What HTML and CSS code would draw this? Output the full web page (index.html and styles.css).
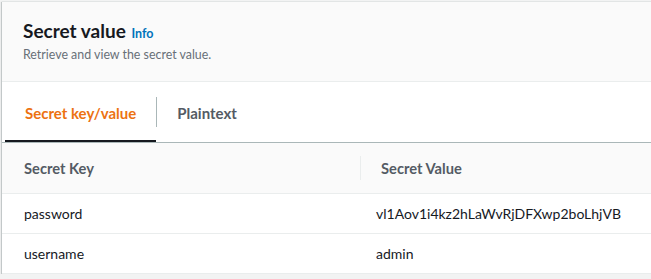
FILE: index.html
```html
<!DOCTYPE html>
<html lang="en">
<head>
  <meta charset="UTF-8">
  <title>Secret value</title>
  <link rel="stylesheet" href="styles.css">
</head>
<body>
  <div class="card">
    <div class="card-header">
      <h2>Secret value <a class="info" href="#">Info</a></h2>
      <p>Retrieve and view the secret value.</p>
    </div>

    <div class="tabs">
      <button class="tab active">Secret key/value</button>
      <span class="tab-sep"></span>
      <button class="tab">Plaintext</button>
    </div>

    <div class="kv-table">
      <div class="kv-row head">
        <div class="cell">Secret Key</div>
        <div class="cell sep">Secret Value</div>
      </div>
      <div class="kv-row">
        <div class="cell">password</div>
        <div class="cell value">vl1Aov1i4kz2hLaWvRjDFXwp2boLhjVB</div>
      </div>
      <div class="kv-row">
        <div class="cell">username</div>
        <div class="cell value">admin</div>
      </div>
    </div>
  </div>
</body>
</html>
```

FILE: styles.css
```css
:root {
  --page-bg: #f2f3f3;
  --header-bg: #fafafa;
  --border: #eaeded;
  --text: #16191f;
  --muted: #545b64;
  --sub: #687078;
  --orange: #ec7211;
  --link: #0073bb;
}

* {
  box-sizing: border-box;
}
body {
  margin: 0;
  background: var(--page-bg);
  font-family: Lato, "Open Sans", sans-serif;
  color: var(--text);
  overflow: hidden;
}
.card {
  margin: 1px 0 0 2px;
  width: 720px;
  background: white;
  box-shadow: 0 1px 1px 0 rgba(0,28,36,0.3), -1px 1px 1px 0 rgba(0,28,36,0.15);
  border-top: 1px solid #e2e5e5;
}
.card-header {
  background: var(--header-bg);
  padding: 18px 20px 18px 21px;
  border-bottom: 1px solid var(--border);
}
.card-header h2 {
  margin: 0;
  font-size: 19px;
  line-height: 22px;
  font-weight: 700;
}
.info {
  font-size: 12.5px;
  line-height: 1;
  color: var(--link);
  text-decoration: none;
  font-weight: 700;
  margin-left: 1px;
}
.card-header p {
  margin: 5px 0 0;
  font-size: 12.4px;
  line-height: 16px;
  color: var(--sub);
}
.tabs {
  display: flex;
  align-items: center;
  height: 61px;
  padding-left: 3px;
  border-bottom: 1px solid #aab7b8;
}
.tab {
  height: 60px;
  padding: 3px 20px 0;
  border: none;
  border-bottom: 2px solid transparent;
  background: none;
  font-family: inherit;
  font-size: 15px;
  font-weight: 700;
  color: var(--muted);
  cursor: pointer;
}
.tab.active {
  color: var(--orange);
  border-bottom-color: var(--text);
}
.tab-sep {
  width: 1px;
  height: 30px;
  background: #aab7b8;
}
.kv-row {
  display: grid;
  grid-template-columns: 358px 1fr;
  height: 40px;
  align-items: center;
  border-bottom: 1px solid var(--border);
  font-size: 14px;
}
.kv-row.head {
  height: 51px;
  background: var(--header-bg);
  font-weight: 700;
  font-size: 14.7px;
  color: var(--muted);
}
.cell {
  padding-left: 22px;
}
.cell.sep {
  border-left: 1px solid var(--border);
  padding-left: 20px;
  line-height: 24px;
}
.cell.value {
  padding-left: 16px;
}
```
